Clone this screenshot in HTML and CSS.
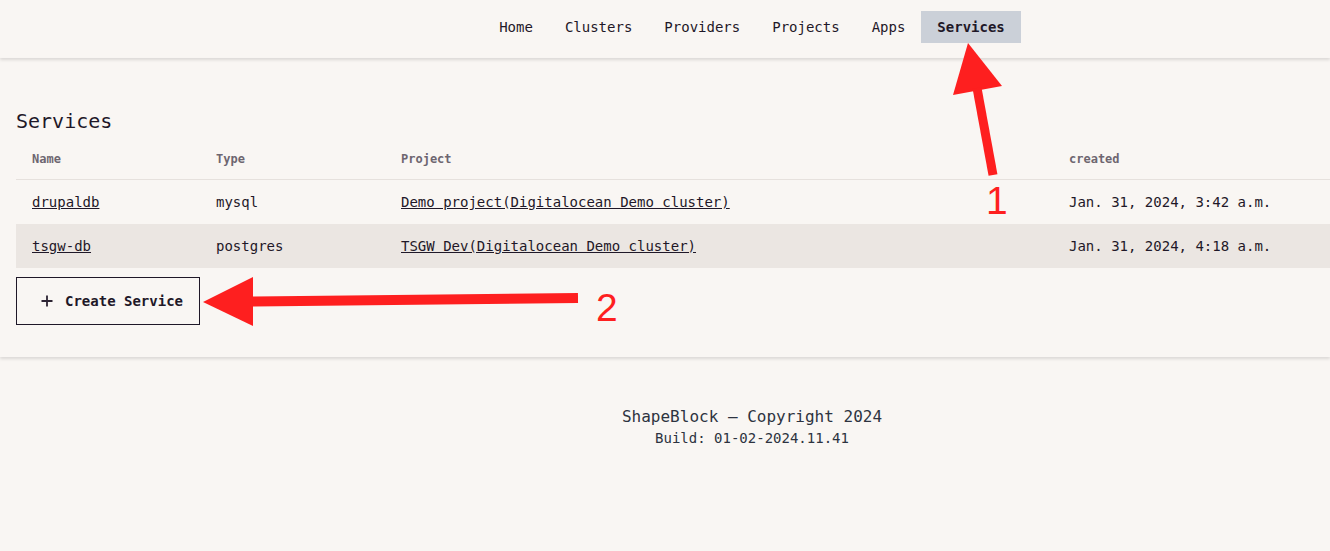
FILE: index.html
```html
<!DOCTYPE html>
<html lang="en">
<head>
<meta charset="utf-8">
<title>Services</title>
<link rel="stylesheet" href="styles.css">
</head>
<body>
<header class="topbar">
  <nav class="nav">
    <a class="nav-link" href="#">Home</a>
    <a class="nav-link" href="#">Clusters</a>
    <a class="nav-link" href="#">Providers</a>
    <a class="nav-link" href="#">Projects</a>
    <a class="nav-link" href="#">Apps</a>
    <a class="nav-link active" href="#">Services</a>
  </nav>
</header>

<main class="card">
  <h1 class="title">Services</h1>
  <div class="table">
    <div class="row head">
      <div class="cell">Name</div>
      <div class="cell">Type</div>
      <div class="cell">Project</div>
      <div class="cell">created</div>
    </div>
    <div class="row">
      <div class="cell"><a href="#">drupaldb</a></div>
      <div class="cell">mysql</div>
      <div class="cell"><a href="#">Demo project(Digitalocean Demo cluster)</a></div>
      <div class="cell">Jan. 31, 2024, 3:42 a.m.</div>
    </div>
    <div class="row alt">
      <div class="cell"><a href="#">tsgw-db</a></div>
      <div class="cell">postgres</div>
      <div class="cell"><a href="#">TSGW Dev(Digitalocean Demo cluster)</a></div>
      <div class="cell">Jan. 31, 2024, 4:18 a.m.</div>
    </div>
  </div>
  <button class="btn" type="button">
    <svg class="plus" width="12" height="12" viewBox="0 0 12 12"><path d="M6 0.5V11.5M0.5 6H11.5" stroke="#2d2433" stroke-width="1.8" fill="none"/></svg>
    <span>Create Service</span>
  </button>
</main>

<footer class="footer">
  <div class="copy">ShapeBlock — Copyright 2024</div>
  <div class="build">Build: 01-02-2024.11.41</div>
</footer>

<svg class="annot" width="1330" height="551" viewBox="0 0 1330 551">
  <polygon points="968,43 953,95 1002,86" fill="#fe1f1f"/>
  <line x1="977" y1="88" x2="993" y2="175" stroke="#fe1f1f" stroke-width="9"/>
  <text x="986" y="214" class="num">1</text>
  <polygon points="203,302 253,277 253,326" fill="#fe1f1f"/>
  <line x1="250" y1="301.5" x2="578" y2="298" stroke="#fe1f1f" stroke-width="10"/>
  <text x="596" y="321" class="num">2</text>
</svg>
</body>
</html>
```

FILE: styles.css
```css
* { box-sizing: border-box; }

body {
  margin: 0;
  background: #f9f6f3;
  color: #1f1828;
  font-family: "DejaVu Sans Mono", "Liberation Mono", monospace;
  position: relative;
  min-height: 551px;
}

.topbar {
  height: 58px;
  display: flex;
  justify-content: center;
  align-items: flex-start;
  padding-top: 11px;
  padding-left: 174px;
  box-shadow: 0 2px 3px rgba(0, 0, 0, 0.12);
  position: relative;
  z-index: 1;
}

.nav { display: flex; }

.nav-link {
  display: block;
  height: 32px;
  line-height: 32px;
  padding: 0 16px;
  font-size: 14px;
  color: #1f1828;
  text-decoration: none;
}

.nav-link.active {
  background: #cbd0d8;
  font-weight: bold;
}

.card {
  padding: 49px 0 32px 16px;
  box-shadow: 0 2px 3px rgba(0, 0, 0, 0.12);
}

.title {
  margin: 0 0 5px;
  font-size: 20px;
  line-height: 28px;
  font-weight: normal;
}

.table { display: flex; flex-direction: column; }

.row {
  display: grid;
  grid-template-columns: 184px 185px 668px 1fr;
  height: 44px;
  align-items: center;
  font-size: 14px;
}

.row.head {
  height: 40px;
  padding-bottom: 2px;
  border-bottom: 1px solid #e6e1dd;
  font-size: 12px;
  font-weight: bold;
  color: #6e6670;
}

.row.alt { background: #ebe6e2; }

.cell { padding-left: 16px; white-space: nowrap; }

.cell a { color: #1f1828; text-decoration: underline; }

.btn {
  margin-top: 9px;
  width: 184px;
  height: 48px;
  display: flex;
  align-items: center;
  gap: 12px;
  padding: 0 0 0 24px;
  background: transparent;
  border: 1px solid #1f1828;
  font-family: inherit;
  font-size: 14px;
  font-weight: bold;
  color: #1f1828;
}

.plus { flex: none; }

.footer {
  margin-top: 48px;
  padding-left: 174px;
  text-align: center;
  color: #2d3340;
}

.copy { font-size: 16px; line-height: 22px; padding-top: 1px; }
.build { font-size: 14px; line-height: 21px; }

.annot {
  position: absolute;
  top: 0;
  left: 0;
  pointer-events: none;
  z-index: 5;
}

.num {
  font-family: "Liberation Sans", Arial, sans-serif;
  font-size: 39px;
  fill: #fe1f1f;
}
```
